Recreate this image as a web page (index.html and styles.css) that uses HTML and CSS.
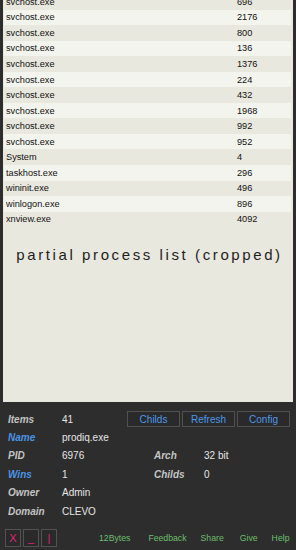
FILE: index.html
```html
<!DOCTYPE html>
<html lang="en">
<head>
	<meta charset="UTF-8">
	<title>Process list</title>
	<link rel="stylesheet" href="styles.css">
</head>
<body>
	<div class="app">
		<div class="list">
			<ul class="procs">
				<li><span>svchost.exe</span><span>696</span></li>
				<li class="alt"><span>svchost.exe</span><span>2176</span></li>
				<li><span>svchost.exe</span><span>800</span></li>
				<li class="alt"><span>svchost.exe</span><span>136</span></li>
				<li><span>svchost.exe</span><span>1376</span></li>
				<li class="alt"><span>svchost.exe</span><span>224</span></li>
				<li><span>svchost.exe</span><span>432</span></li>
				<li class="alt"><span>svchost.exe</span><span>1968</span></li>
				<li><span>svchost.exe</span><span>992</span></li>
				<li class="alt"><span>svchost.exe</span><span>952</span></li>
				<li><span>System</span><span>4</span></li>
				<li class="alt"><span>taskhost.exe</span><span>296</span></li>
				<li><span>wininit.exe</span><span>496</span></li>
				<li class="alt"><span>winlogon.exe</span><span>896</span></li>
				<li><span>xnview.exe</span><span>4092</span></li>
			</ul>
			<p class="note">partial process list (cropped)</p>
		</div>
		<div class="info">
			<div class="row">
				<span class="lbl">Items</span><span class="val">41</span>
				<div class="btns">
					<button>Childs</button>
					<button>Refresh</button>
					<button>Config</button>
				</div>
			</div>
			<div class="row">
				<span class="lbl blue">Name</span><span class="val">prodiq.exe</span>
			</div>
			<div class="row">
				<span class="lbl">PID</span><span class="val">6976</span>
				<span class="lbl r">Arch</span><span class="val">32 bit</span>
			</div>
			<div class="row">
				<span class="lbl blue">Wins</span><span class="val">1</span>
				<span class="lbl r">Childs</span><span class="val">0</span>
			</div>
			<div class="row">
				<span class="lbl">Owner</span><span class="val">Admin</span>
			</div>
			<div class="row">
				<span class="lbl">Domain</span><span class="val">CLEVO</span>
			</div>
		</div>
		<div class="bar">
			<div class="wins">
				<button>X</button>
				<button>_</button>
				<button>|</button>
			</div>
			<div class="links">
				<a href="#">12Bytes</a>
				<a href="#" class="feedback">Feedback</a>
				<a href="#" class="share">Share</a>
				<a href="#" class="give">Give</a>
				<a href="#" class="help">Help</a>
			</div>
		</div>
	</div>
</body>
</html>
```

FILE: styles.css
```css
*{margin:0;padding:0;box-sizing:border-box;}
ul,li{list-style:none;}
body{background:#2d2d2d;font-family:"Liberation Sans",Arial,sans-serif;}
.app{width:296px;height:550px;background:#2d2d2d;display:flex;flex-direction:column;overflow:hidden;}
.list{height:402px;margin:0 3px;background:#e9e8de;overflow:hidden;}
.procs{margin-top:-6px;padding:0 2px 0 1px;}
.procs li{height:15.55px;display:flex;align-items:center;font-size:9.2px;color:#111;}
.procs li.alt{background:#f4f4ee;}
.procs li span:first-child{width:233px;padding-left:2px;}
.note{margin-top:19px;text-align:center;font-size:15px;letter-spacing:2.6px;color:#1e1e1e;padding-left:3px;}
.info{padding:8px 0 0 8px;}
.row{height:18.4px;display:flex;align-items:center;font-size:10px;}
.lbl{width:54px;color:#c4c4c4;font-style:italic;font-weight:bold;}
.lbl.r{width:50px;}
.lbl.blue{color:#4a94e6;}
.val{width:92px;color:#e6e6e6;}
.row .val:last-child{width:auto;}
.btns{display:flex;gap:2px;margin-left:-27px;}
.btns button{width:53px;height:16px;background:#2a2a2a;border:1px solid #505050;color:#4a98ea;font-family:inherit;font-size:10px;}
.bar{display:flex;align-items:center;padding:9px 0 0 5px;}
.wins{display:flex;gap:2px;}
.wins button{width:16px;height:18px;background:#2a2a2a;border:1px solid #525252;color:#e0207a;font-family:inherit;font-size:11px;}
.links{display:flex;margin-left:42px;font-size:8.7px;}
.links a{color:#6cbe6c;text-decoration:none;}
.links .feedback{margin-left:18px;}
.links .share{margin-left:14px;}
.links .give{margin-left:16px;}
.links .help{margin-left:14px;}
```
